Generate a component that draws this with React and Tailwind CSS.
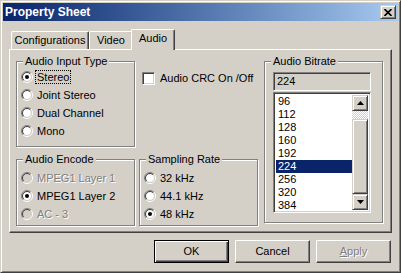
const raised =
  'border border-t-white border-l-white border-r-[#404040] border-b-[#404040] shadow-[inset_-1px_-1px_0_#808080]';
const raisedSb =
  'border border-t-[#d4d0c8] border-l-[#d4d0c8] border-r-[#404040] border-b-[#404040] shadow-[inset_1px_1px_0_#fff,inset_-1px_-1px_0_#808080]';
const sunken =
  'border border-t-[#808080] border-l-[#808080] border-r-white border-b-white shadow-[inset_1px_1px_0_#404040,inset_-1px_-1px_0_#d4d0c8]';
const groupBox = 'border border-[#808080] shadow-[inset_1px_1px_0_#fff,1px_1px_0_#fff]';
const disabledText = 'text-[#808080] [text-shadow:1px_1px_0_#fff]';

function Radio({ checked, disabled }) {
  return (
    <svg width="12" height="12" viewBox="0 0 12 12" className="shrink-0">
      <circle cx="6" cy="6" r="4" fill={disabled ? '#d4d0c8' : '#fff'} />
      <path d="M2.1 9.9 A5.5 5.5 0 0 1 9.9 2.1" fill="none" stroke="#808080" />
      <path d="M9.9 2.1 A5.5 5.5 0 0 1 2.1 9.9" fill="none" stroke="#fff" />
      <path d="M2.8 9.2 A4.5 4.5 0 0 1 9.2 2.8" fill="none" stroke="#404040" />
      <path d="M9.2 2.8 A4.5 4.5 0 0 1 2.8 9.2" fill="none" stroke="#d4d0c8" />
      {checked && <circle cx="6" cy="6" r="2" fill="#000" />}
    </svg>
  );
}

function RadioRow({ label, checked, disabled, focused }) {
  return (
    <div className="flex h-[18px] items-center gap-[4px] pl-[4px]">
      <Radio checked={checked} disabled={disabled} />
      {focused ? (
        <span className="-ml-[2px] border border-dotted border-black px-[1px] leading-[12px]">{label}</span>
      ) : (
        <span className={disabled ? disabledText : ''}>{label}</span>
      )}
    </div>
  );
}

function Group({ title, className, children }) {
  return (
    <fieldset className={`${groupBox} ${className}`}>
      <legend className="ml-[6px] bg-[#d4d0c8] px-[2px] leading-[13px]">{title}</legend>
      {children}
    </fieldset>
  );
}

function Arrow({ up }) {
  return (
    <svg width="7" height="4" viewBox="0 0 7 4">
      <polygon points={up ? '3.5,0 7,4 0,4' : '0,0 7,0 3.5,4'} fill="#000" />
    </svg>
  );
}

export default function App() {
  const rates = ['96', '112', '128', '160', '192', '224', '256', '320', '384'];

  return (
    <div className="h-[273px] w-[401px] border border-t-[#d4d0c8] border-l-[#d4d0c8] border-r-[#404040] border-b-[#404040] bg-[#d4d0c8] p-[2px] font-['Liberation_Sans',Arial,sans-serif] text-[11px] leading-[13px] text-black shadow-[inset_1px_1px_0_#fff,inset_-1px_-1px_0_#808080]">
      <div className="flex h-[18px] items-center justify-between bg-linear-to-r from-[#0a246a] to-[#a6caf0] pl-[2px] pr-[2px]">
        <span className="text-[12px] font-bold text-white">Property Sheet</span>
        <div className={`flex h-[14px] w-[16px] items-center justify-center bg-[#d4d0c8] ${raisedSb}`}>
          <svg width="8" height="7" viewBox="0 0 8 7">
            <path d="M0.5 0 L7.5 7 M7.5 0 L0.5 7" stroke="#000" strokeWidth="1.6" />
          </svg>
        </div>
      </div>

      <div className="px-[6px] pt-[8px]">
        <div className="flex h-[20px] items-end pl-[2px]">
          <div className="flex h-[18px] w-[78px] justify-center rounded-t-[2px] border-t border-l border-r border-t-white border-l-white border-r-[#404040] pt-[2px] shadow-[inset_-1px_0_0_#808080]">
            Configurations
          </div>
          <div className="flex h-[18px] w-[44px] justify-center rounded-t-[2px] border-t border-l border-r border-t-white border-l-white border-r-[#404040] pt-[2px] shadow-[inset_-1px_0_0_#808080]">
            Video
          </div>
          <div className="relative z-10 -mx-[2px] -mb-[1px] flex h-[21px] w-[44px] justify-center rounded-t-[2px] border-t border-l border-r border-t-white border-l-white border-r-[#404040] bg-[#d4d0c8] pt-[2px] shadow-[inset_-1px_0_0_#808080]">
            Audio
          </div>
        </div>

        <div className={`flex h-[184px] pl-[6px] pt-[5px] ${raised}`}>
          <div className="flex w-[119px] flex-col gap-[6px]">
            <Group title="Audio Input Type" className="h-[92px]">
              <RadioRow label="Stereo" checked focused />
              <RadioRow label="Joint Stereo" />
              <RadioRow label="Dual Channel" />
              <RadioRow label="Mono" />
            </Group>
            <Group title="Audio Encode" className="h-[73px]">
              <div className="pt-[3px]">
                <RadioRow label="MPEG1 Layer 1" disabled />
                <RadioRow label="MPEG1 Layer 2" checked />
                <RadioRow label="AC - 3" disabled />
              </div>
            </Group>
          </div>

          <div className="ml-[4px] flex w-[119px] flex-col gap-[6px]">
            <div className="h-[92px] pl-[3px] pt-[17px]">
              <div className="flex items-center gap-[5px]">
                <div className={`h-[13px] w-[13px] bg-white ${sunken}`} />
                <span>Audio CRC On /Off</span>
              </div>
            </div>
            <Group title="Sampling Rate" className="h-[73px]">
              <div className="pt-[3px]">
                <RadioRow label="32 kHz" />
                <RadioRow label="44.1 kHz" />
                <RadioRow label="48 kHz" checked />
              </div>
            </Group>
          </div>

          <div className="ml-[6px] w-[119px]">
            <Group title="Audio Bitrate" className="h-[168px]">
              <div className="pl-[8px]">
                <div className={`mt-[4px] flex h-[19px] w-[98px] items-center px-[3px] ${sunken}`}>224</div>
                <div className={`mt-[1px] flex h-[121px] w-[98px] overflow-hidden bg-white ${sunken} p-[2px]`}>
                  <div className="flex-1">
                    {rates.map((r) => (
                      <div
                        key={r}
                        className={`h-[13px] px-[2px] ${r === '224' ? 'bg-[#0a246a] text-white' : ''}`}
                      >
                        {r}
                      </div>
                    ))}
                  </div>
                  <div className="flex w-[16px] flex-col">
                    <div className={`flex h-[16px] items-center justify-center bg-[#d4d0c8] ${raisedSb}`}>
                      <Arrow up />
                    </div>
                    <div className="h-[8px] bg-[repeating-conic-gradient(#fff_0%_25%,#d4d0c8_0%_50%)] bg-[length:2px_2px]" />
                    <div className={`h-[77px] bg-[#d4d0c8] ${raisedSb}`} />
                    <div className={`flex h-[16px] items-center justify-center bg-[#d4d0c8] ${raisedSb}`}>
                      <Arrow />
                    </div>
                  </div>
                </div>
              </div>
            </Group>
          </div>
        </div>

        <div className="mt-[7px] flex justify-end gap-[6px] pr-[1px]">
          <button
            type="button"
            className="flex h-[23px] w-[75px] items-center justify-center border border-black shadow-[inset_1px_1px_0_#fff,inset_-1px_-1px_0_#404040,inset_-2px_-2px_0_#808080]"
          >
            OK
          </button>
          <button type="button" className={`flex h-[23px] w-[75px] items-center justify-center ${raised}`}>
            Cancel
          </button>
          <button type="button" className={`flex h-[23px] w-[75px] items-center justify-center ${raised} ${disabledText}`}>
            <span>
              <span className="underline">A</span>pply
            </span>
          </button>
        </div>
      </div>
    </div>
  );
}
